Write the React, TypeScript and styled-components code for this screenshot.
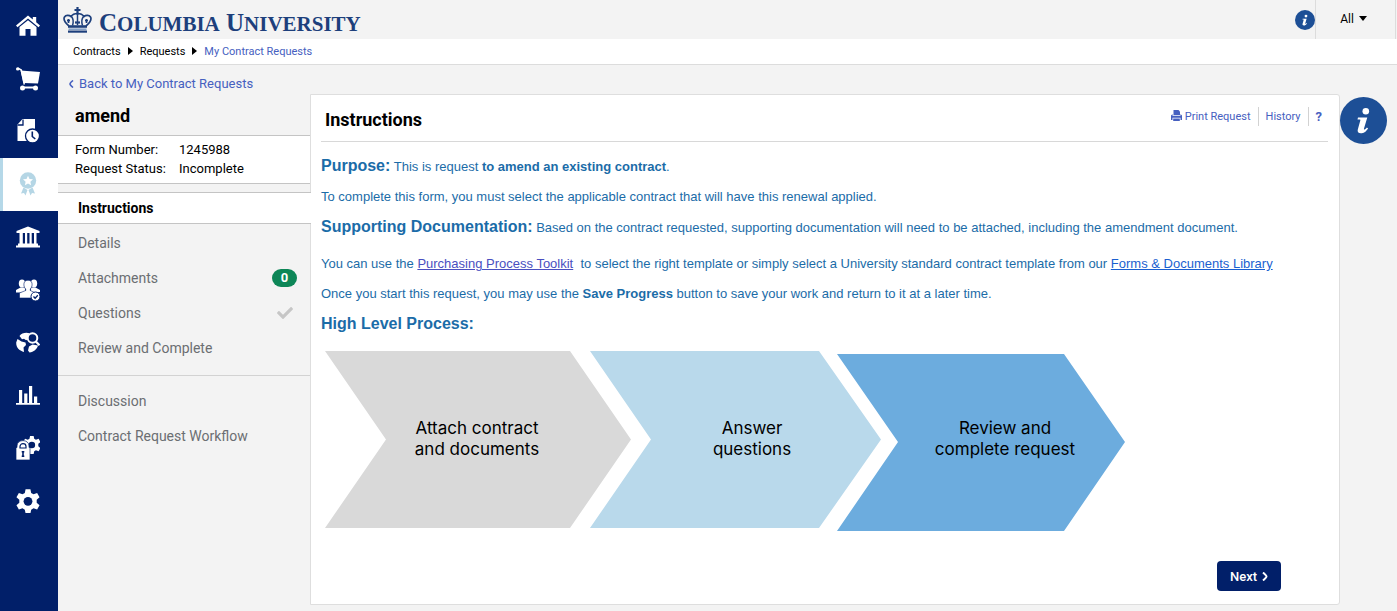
import React from "react";
import styled, { createGlobalStyle } from "styled-components";
import { FaCheck } from "react-icons/fa";

const GlobalStyle = createGlobalStyle`
  * { box-sizing: border-box; }
  body {
    margin: 0;
    background: #f3f3f3;
    color: #000;
    font-family: Roboto, sans-serif;
    font-size: 13px;
  }
  a { color: #4660c0; text-decoration: none; }
  h1, h2, h3, p, ul, dl, dd { margin: 0; padding: 0; }
  ul { list-style: none; }
`;

const Page = styled.div`
  display: grid;
  grid-template-columns: 58px minmax(0, 1fr);
  min-height: 100vh;
`;

const Rail = styled.nav`
  background: #011f69;
`;

const RailList = styled.ul`
  display: grid;
  grid-template-rows: repeat(10, minmax(0, 1fr));
  height: 528px;
`;

const RailLink = styled.a<{ $active?: boolean }>`
  display: flex;
  align-items: center;
  justify-content: center;
  height: 100%;
  padding: 0 ${(p) => (p.$active ? 5 : 2)}px 1px 0;
  color: ${(p) => (p.$active ? "#b5d6e5" : "#fff")};
  background: ${(p) => (p.$active ? "#fff" : "transparent")};
  border-left: ${(p) => (p.$active ? "3px solid #b5d8e8" : "0")};
`;

const TopBar = styled.header`
  display: flex;
  justify-content: space-between;
  height: 39px;
`;

const Brand = styled.a`
  display: flex;
  align-items: center;
  gap: 7px;
  padding-left: 5px;
  color: #1d3f7c;
  font: 700 25px/36px "Liberation Serif", serif;
`;

const BrandName = styled.span`
  padding-top: 8px;
  white-space: nowrap;
`;

const BrandCaps = styled.span`
  font-size: 21px;
`;

const TopTools = styled.div`
  display: flex;
  align-items: center;
`;

const InfoButton = styled.button<{ $size: number }>`
  display: block;
  width: ${(p) => p.$size}px;
  height: ${(p) => p.$size}px;
  padding: 0;
  border: 0;
  border-radius: 50%;
  background: #1d4f96;
  svg { display: block; width: 100%; height: 100%; }
`;

const ScopeButton = styled.button`
  display: flex;
  align-items: center;
  justify-content: center;
  gap: 5px;
  width: 81px;
  height: 39px;
  margin-right: 1px;
  padding: 0 4px 2px 0;
  border: solid #dcdcdc;
  border-width: 0 1px;
  background: none;
  font: 12px Roboto, sans-serif;
  color: #000;
`;

const Crumbs = styled.nav`
  display: flex;
  align-items: center;
  gap: 7px;
  height: 26px;
  padding: 0 0 1px 15px;
  border-bottom: 1px solid #dcdcdc;
  background: #fff;
  font-size: 11px;
`;

const CrumbLink = styled.a<{ $current?: boolean }>`
  color: ${(p) => (p.$current ? "#4660c0" : "#000")};
`;

const BackLink = styled.a`
  display: flex;
  gap: 5px;
  height: 30px;
  padding: 9px 0 0 11px;
  line-height: 20px;
  svg { margin-top: 6px; }
`;

const Body = styled.div`
  display: grid;
  grid-template-columns: 252px minmax(0, 1fr) 57px;
`;

const RequestName = styled.h1`
  height: 40px;
  padding-left: 17px;
  font-size: 18px;
  font-weight: 700;
  line-height: 42px;
`;

const Facts = styled.dl`
  display: grid;
  grid-template-columns: 104px 1fr;
  margin-bottom: 8px;
  padding: 4px 0 5px 17px;
  border: solid #c4c4c4;
  border-width: 1px 0;
  background: #fff;
  line-height: 19px;
`;

const Steps = styled.ul`
  padding-bottom: 10px;
  border-bottom: 1px solid #d2d2d2;
`;

const MoreLinks = styled(Steps)`
  padding-top: 7px;
  border-bottom: 0;
`;

const StepLink = styled.a`
  display: flex;
  align-items: center;
  justify-content: space-between;
  height: 35px;
  padding: 0 13px 0 20px;
  color: #6b6e72;
  font-size: 14px;
`;

const CurrentStep = styled(StepLink)`
  position: relative;
  z-index: 1;
  height: 32px;
  margin: 0 -1px 1px 0;
  border: solid #c4c4c4;
  border-width: 1px 0;
  background: #fff;
  color: #000;
  font-weight: 700;
`;

const Count = styled.span`
  width: 25px;
  border-radius: 9px;
  background: #0d8657;
  color: #fff;
  font-size: 13px;
  font-weight: 700;
  line-height: 18px;
  text-align: center;
`;

const Tick = styled(FaCheck)`
  width: 16px;
  height: 16px;
  margin-right: 4px;
  color: #c6c6c6;
`;

const Panel = styled.main`
  min-height: 510px;
  margin-top: -1px;
  padding: 0 11px 0 10px;
  border: 1px solid #dedede;
  border-radius: 0 3px 3px 0;
  background: #fff;
`;

const PanelHead = styled.div`
  display: flex;
  justify-content: space-between;
  height: 47px;
  border-bottom: 1px solid #d8d8d8;
`;

const PanelTitle = styled.h2`
  padding-left: 4px;
  font-size: 18px;
  font-weight: 700;
  line-height: 50px;
`;

const PanelLinks = styled.div`
  display: flex;
  align-items: center;
  height: 19px;
  margin-top: 12px;
  font-size: 11px;
`;

const PanelLink = styled.a`
  display: flex;
  align-items: center;
  gap: 3px;
  height: 19px;
  padding: 0 7px;
  svg { margin-bottom: 3px; }
  & + & { border-left: 1px solid #d2d2d2; }
  &:last-child { padding-right: 6px; font-size: 13px; font-weight: 700; }
`;

const Copy = styled.div`
  padding-top: 14px;
  color: #1b6ca8;
  font: 13px/20px "Liberation Sans", sans-serif;
`;

const Line = styled.p<{ $gap?: number }>`
  margin-bottom: ${(p) => p.$gap ?? 10}px;
`;

const Lead = styled.strong`
  font-size: 16px;
`;

const DocLink = styled.a<{ $visited?: boolean }>`
  color: ${(p) => (p.$visited ? "#4a4fc0" : "#1a5fd0")};
  text-decoration: underline;
`;

const Flow = styled.svg`
  display: block;
  width: 804px;
  max-width: 100%;
  margin-top: 16px;
  font: 17px Inter, sans-serif;
`;

const Actions = styled.div`
  display: flex;
  justify-content: flex-end;
  padding: 29px 47px 13px 0;
`;

const NextButton = styled.button`
  display: flex;
  align-items: center;
  justify-content: center;
  gap: 5px;
  width: 64px;
  height: 30px;
  border: 0;
  border-radius: 4px;
  background: #011f69;
  color: #fff;
  font: 500 13px Roboto, sans-serif;
`;

const HelpSlot = styled.aside`
  padding-top: 2px;
`;

const GEAR =
  "M9.8 0h4.4l.7 3.4 2.1 1.2 3.3-1.1 2.2 3.8-2.6 2.3v2.8l2.6 2.3-2.2 3.8-3.3-1.1-2.1 1.2-.7 3.4H9.8l-.7-3.4L7 17.4l-3.3 1.1-2.2-3.8 2.6-2.3V9.6L1.500 7.3l2.2-3.8L7 4.600l2.100-1.200z";

const Icon = ({ children }: { children: React.ReactNode }) => (
  <svg width="24" height="24" viewBox="0 0 24 24" fill="currentColor" aria-hidden="true">
    {children}
  </svg>
);

const railItems: { name: string; active?: boolean; art: React.ReactNode }[] = [
  {
    name: "Home",
    art: (
      <>
        <path d="M12 1.500 0 11.500l1.500 1.700L12 4.600l10.500 8.600 1.500-1.700-3.800-3.200V3h-3.400v2.500z" />
        <path d="M12 6.200 3.500 13v8.800h6V15h5v6.800h6V13z" />
      </>
    ),
  },
  {
    name: "Shop",
    art: (
      <>
        <circle cx="1.700" cy="1.900" r="1.700" />
        <path d="M2 1.200 5.300 3l3 14.500" fill="none" stroke="currentColor" strokeWidth="1.500" />
        <path d="M4.500 3.500 24 5l-2 11.500-14.500-.5z" />
        <path d="M6 19.500h15v2H6z" />
        <circle cx="6.500" cy="21" r="2.500" />
        <circle cx="19.500" cy="21" r="2.500" />
      </>
    ),
  },
  {
    name: "Orders",
    art: (
      <>
        <path d="M6.500 0H19v22H1.500V5.500z" />
        <path d="M7 .5V6H1.500" fill="none" stroke="#011f69" strokeWidth="1.300" />
        <circle cx="16.500" cy="17" r="7" fill="currentColor" stroke="#011f69" strokeWidth="1.300" />
        <path d="M16.300 12.500v5l3 2.500" fill="none" stroke="#011f69" strokeWidth="1.600" />
      </>
    ),
  },
  {
    name: "Contracts",
    active: true,
    art: (
      <>
        <path d="m7.500 15.500-2.500 6 3-.5 1.500 2.500 2-5.500zM16.500 15.500l2.500 6-3-.5-1.500 2.500-2-5.500z" />
        <circle cx="12" cy="8.500" r="8.200" />
        <path fill="#fff" d="m12 3.700 1.500 3.200 3.500.4-2.600 2.400.7 3.500-3.100-1.700-3.100 1.700.7-3.500L7 7.300l3.500-.4z" />
      </>
    ),
  },
  {
    name: "Accounting",
    art: (
      <path d="M12 1.500.5 6v2h23V6zM3.500 8h3.300v11H3.500zM9 8h2.200v11H9zM13.500 8h2.200v11h-2.200zM18 8h2.500v11H18zM2 18.500h20v2H2zM0 20.500h24v2H0z" />
    ),
  },
  {
    name: "Suppliers",
    art: (
      <>
        <ellipse cx="6" cy="5.500" rx="3.200" ry="4" />
        <ellipse cx="18" cy="5.500" rx="3.200" ry="4" />
        <path d="M0 14.500V12l4.500-2.500H9v5zM24 14v-2l-4.500-2.500H15v5z" />
        <path
          d="M12 2.200c3 0 4.300 2 4.100 4.800-.2 2-1 3-1.800 4v1.500l5.200 2.500v5H3.500v-5l6.200-2.500V11c-1-1-1.600-2-1.800-4-.2-2.800 1.100-4.800 4.100-4.800z"
          stroke="#011f69"
          strokeWidth=".6"
        />
        <circle cx="19.500" cy="18.500" r="4.500" stroke="#011f69" strokeWidth="1" />
        <path d="m17.500 18.500 1.600 1.700 2.700-3" fill="none" stroke="#011f69" strokeWidth="1.300" />
      </>
    ),
  },
  {
    name: "Sourcing",
    art: (
      <>
        <path d="M3.500 5C5 3 7.500 1.800 10.500 1.800l3 .4-1.500 2 .5 4-2.500 1-2-1.500-2 .5z" />
        <path d="M.2 11.500 1.500 8l4 2.500 4 1 .5 2.500-2.500 2.500.5 4.500C4 20 0 17 .2 11.500z" />
        <path d="m13 15.500 3.500-2 5.500 1c-.7 3.500-4.500 6.500-8.500 7l-1.500-2z" />
        <circle cx="16.500" cy="7" r="4.800" fill="#011f69" stroke="currentColor" strokeWidth="2" />
        <path d="m19.800 10.500 3.700 3.800" fill="none" stroke="currentColor" strokeWidth="2.300" />
      </>
    ),
  },
  {
    name: "Reporting",
    art: <path d="M0 20h24v1.800H0zM3 7h3.200v13H3zM8.200 10.500h3.200V20H8.200zM13 3h3.200v17H13zM18 13.500h3.200V20H18z" />,
  },
  {
    name: "Administration",
    art: (
      <>
        <g transform="translate(6 0) scale(.82)">
          <path d={GEAR} />
          <circle cx="12" cy="11" r="4" fill="#011f69" />
        </g>
        <path d="M0 11.500h1V10C1 2.800 13 2.800 13 10v1.500h1V24H0z" stroke="#011f69" strokeWidth=".7" />
        <path d="M4 12v-1.500c0-3.800 6-3.800 6 0V12z" fill="none" stroke="#011f69" strokeWidth="1.200" />
        <path d="M5.700 15h2.600v1.500h-.5v3h.5V21H5.700v-1.500h.5v-3h-.5z" fill="#011f69" />
      </>
    ),
  },
  {
    name: "Setup",
    art: (
      <g transform="translate(-1.200 .2) scale(1.100)">
        <path d={GEAR} />
        <circle cx="12" cy="11" r="4" fill="#011f69" />
      </g>
    ),
  },
];

const InfoGlyph = () => (
  <svg viewBox="0 0 47 47" fill="#fff" aria-hidden="true">
    <circle cx="25.800" cy="14.300" r="3.300" />
    <path d="M18 20.500h9.300L24 31.500c-.4 1.500.6 1.700 2.900-.9l1.200.9c-2.600 3.700-4.400 4.800-7.200 4.800-2.700 0-3.700-1.600-3.100-3.800l2.500-9.100c.2-.7 0-1-.8-1h-2z" />
  </svg>
);

const CrumbArrow = () => (
  <svg width="5" height="8" viewBox="0 0 5 8" aria-hidden="true">
    <path d="M0 0l5 4-5 4z" />
  </svg>
);

const DownArrow = () => (
  <svg width="8" height="5" viewBox="0 0 8 5" aria-hidden="true">
    <path d="M0 0h8L4 5z" />
  </svg>
);

const BackArrow = () => (
  <svg width="5" height="8" viewBox="0 0 5 8" fill="none" stroke="currentColor" strokeWidth="1.600" aria-hidden="true">
    <path d="M4 .5Q1 3 1 4t3 3.500" />
  </svg>
);

const NextArrow = () => (
  <svg width="6" height="9" viewBox="0 0 6 9" fill="none" stroke="currentColor" strokeWidth="2" aria-hidden="true">
    <path d="M1 .5Q4.500 3.500 4.500 4.500T1 8.500" />
  </svg>
);

const Printer = () => (
  <svg width="11" height="11" viewBox="0 0 11 11" fill="currentColor" aria-hidden="true">
    <path d="M2.500 0h5L9 1.500V5H2.500z" />
    <path d="M0 5.500 1.500 4v1.800h8V4L11 5.500V10H9.500V7.700h-8V10H0z" />
    <path d="M2.200 8.500h6.600V11H2.200z" />
  </svg>
);

const Crown = () => (
  <svg width="29" height="26" viewBox="0 0 29 26" fill="none" stroke="#1d3f7c" aria-hidden="true">
    <path d="M14.500 0v8M11.500 3h6" strokeWidth="2.200" />
    <path d="M6 19C2 15.500 0 12.500 1.500 10c1.300-2 4.500-2.200 6.500-.5 1.700-2.500 4-3 6.500-3s4.800.5 6.500 3c2-1.700 5.200-1.500 6.500.5 1.500 2.500-.5 5.500-4.500 9" strokeWidth="1.700" />
    <path d="M8.500 9.500c2 2.500 2 6 1 9M20.500 9.500c-2 2.500-2 6-1 9M14.500 8v10" strokeWidth="1.500" />
    <path d="M5.500 12v4M4 13.500h3M23.500 12v4M22 13.500h3" strokeWidth="1.700" />
    <path d="M12 15.500h5" strokeWidth="2.200" />
    <path d="M5 19.500h19" strokeWidth="2.600" />
    <path d="M5.500 22.200h18" stroke="#7f9cc4" strokeWidth="1.500" />
    <path d="M5 24.600h19" strokeWidth="2.200" />
  </svg>
);

export default function App() {
  return (
    <Page>
      <GlobalStyle />
      <Rail aria-label="Main">
        <RailList>
          {railItems.map((item) => (
            <li key={item.name}>
              <RailLink href="#" aria-label={item.name} $active={item.active}>
                <Icon>{item.art}</Icon>
              </RailLink>
            </li>
          ))}
        </RailList>
      </Rail>
      <div>
        <TopBar>
          <Brand href="#">
            <Crown />
            <BrandName>
              C<BrandCaps>OLUMBIA</BrandCaps> U<BrandCaps>NIVERSITY</BrandCaps>
            </BrandName>
          </Brand>
          <TopTools>
            <InfoButton type="button" $size={20} aria-label="Information">
              <InfoGlyph />
            </InfoButton>
            <ScopeButton type="button">
              All <DownArrow />
            </ScopeButton>
          </TopTools>
        </TopBar>
        <Crumbs aria-label="Breadcrumb">
          <CrumbLink href="#">Contracts</CrumbLink>
          <CrumbArrow />
          <CrumbLink href="#">Requests</CrumbLink>
          <CrumbArrow />
          <CrumbLink href="#" $current>
            My Contract Requests
          </CrumbLink>
        </Crumbs>
        <BackLink href="#">
          <BackArrow /> Back to My Contract Requests
        </BackLink>
        <Body>
          <div>
            <RequestName>amend</RequestName>
            <Facts>
              <dt>Form Number:</dt>
              <dd>1245988</dd>
              <dt>Request Status:</dt>
              <dd>Incomplete</dd>
            </Facts>
            <Steps>
              <li>
                <CurrentStep href="#">Instructions</CurrentStep>
              </li>
              <li>
                <StepLink href="#">Details</StepLink>
              </li>
              <li>
                <StepLink href="#">
                  Attachments <Count>0</Count>
                </StepLink>
              </li>
              <li>
                <StepLink href="#">
                  Questions <Tick />
                </StepLink>
              </li>
              <li>
                <StepLink href="#">Review and Complete</StepLink>
              </li>
            </Steps>
            <MoreLinks>
              <li>
                <StepLink href="#">Discussion</StepLink>
              </li>
              <li>
                <StepLink href="#">Contract Request Workflow</StepLink>
              </li>
            </MoreLinks>
          </div>
          <Panel>
            <PanelHead>
              <PanelTitle>Instructions</PanelTitle>
              <PanelLinks>
                <PanelLink href="#">
                  <Printer /> Print Request
                </PanelLink>
                <PanelLink href="#">History</PanelLink>
                <PanelLink href="#">?</PanelLink>
              </PanelLinks>
            </PanelHead>
            <Copy>
              <Line>
                <Lead>Purpose:</Lead> This is request <b>to amend an existing contract</b>.
              </Line>
              <Line>
                To complete this form, you must select the applicable contract that will have this renewal applied.
              </Line>
              <Line $gap={16}>
                <Lead>Supporting Documentation:</Lead> Based on the contract requested, supporting documentation will
                need to be attached, including the amendment document.
              </Line>
              <Line>
                You can use the{" "}
                <DocLink href="#" $visited>
                  Purchasing Process Toolkit
                </DocLink>
                &nbsp; to select the right template or simply select a University standard contract template from our{" "}
                <DocLink href="#">Forms &amp; Documents Library</DocLink>
              </Line>
              <Line>
                Once you start this request, you may use the <b>Save Progress</b> button to save your work and return
                to it at a later time.
              </Line>
              <Line $gap={0}>
                <Lead>High Level Process:</Lead>
              </Line>
            </Copy>
            <Flow viewBox="0 0 804 181" textAnchor="middle">
              <path d="M4 0h245l61 88.500-61 88.500H4l61-88.500z" fill="#d9d9d9" />
              <path d="M269 0h229l62 88.500L498 177H269l61-88.500z" fill="#b9d9eb" />
              <path d="M516 3h227l61 88-61 89H516l61-89z" fill="#6cacde" />
              <text x="156" y="83">Attach contract</text>
              <text x="156" y="104">and documents</text>
              <text x="431" y="83">Answer</text>
              <text x="431" y="104">questions</text>
              <text x="684" y="83">Review and</text>
              <text x="684" y="104">complete request</text>
            </Flow>
            <Actions>
              <NextButton type="button">
                Next <NextArrow />
              </NextButton>
            </Actions>
          </Panel>
          <HelpSlot>
            <InfoButton type="button" $size={47} aria-label="Help">
              <InfoGlyph />
            </InfoButton>
          </HelpSlot>
        </Body>
      </div>
    </Page>
  );
}
